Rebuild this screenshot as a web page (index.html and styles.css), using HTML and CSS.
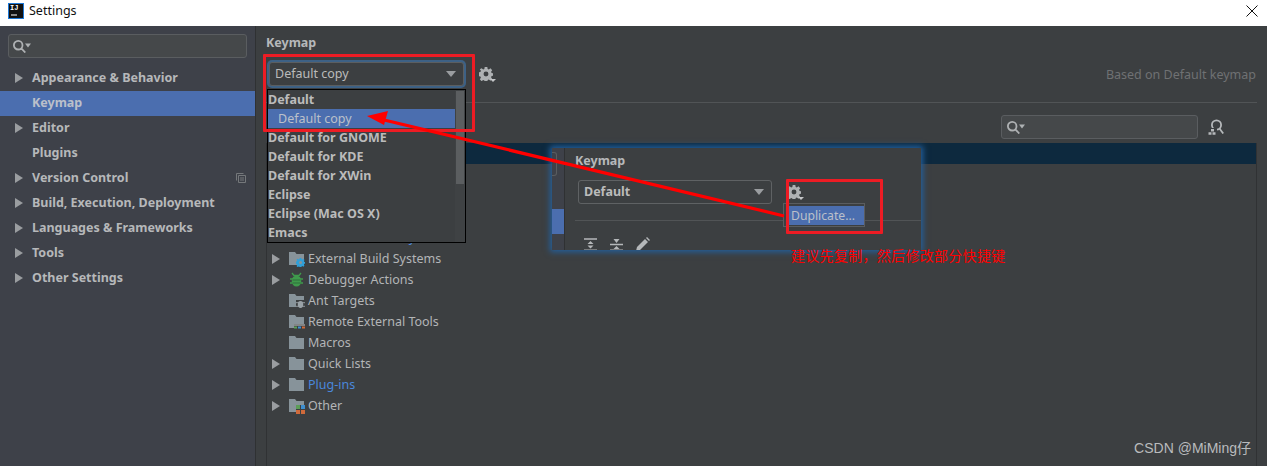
FILE: index.html
```html
<!DOCTYPE html>
<html lang="en">
<head>
<meta charset="utf-8">
<title>Settings</title>
<link rel="stylesheet" href="styles.css">
</head>
<body>
<svg class="defs" width="0" height="0" aria-hidden="true">
  <symbol id="tri" viewBox="0 0 8 10"><path d="M0 0 8 5 0 10z"/></symbol>
  <symbol id="folder" viewBox="0 0 15 13"><path d="M0 0h6l1.500 2H15v11H0z"/></symbol>
  <symbol id="gear" viewBox="0 0 16 16"><path fill-rule="evenodd" d="M6.500 0h3l.4 2.200 1.300.6 1.900-1.300 2 2.100-1.300 1.800.6 1.400 2.200.4v2.800l-2.200.4-.6 1.400 1.300 1.800-2 2.100-1.900-1.300-1.300.5-.4 2.700h-3l-.4-2.200-1.300-.5-1.900 1.300-2-2.100 1.300-1.800-.6-1.400-2.200-.4V6.200l2.200-.4.6-1.400L.9 2.600l2-1.100 1.900 1.300 1.300-.6zM8 5.200a2.800 2.800 0 1 0 0 5.600 2.800 2.800 0 0 0 0-5.600z"/></symbol>
  <symbol id="loupe" viewBox="0 0 18 13"><path fill="none" stroke="currentColor" stroke-width="1.800" d="M5.200.9a4.300 4.300 0 1 0 0 8.600 4.300 4.300 0 0 0 0-8.600zM8.300 8.300l4 4.200"/><path fill="currentColor" d="M12 3.500h6l-3 4z"/></symbol>
</svg>

<div class="window">
  <header class="titlebar">
    <svg class="app-logo" viewBox="0 0 16 16" width="16" height="16" aria-hidden="true">
      <rect x=".5" y=".5" width="15" height="15" fill="#111" stroke="#1e78d6"/>
      <rect x="3" y="11.500" width="6" height="1" fill="#fff"/>
    </svg>
    <span class="logo-letters">IJ</span>
    <span class="title">Settings</span>
    <svg class="close" viewBox="0 0 12 12" width="12" height="12" aria-hidden="true"><path d="M.5.5l11 11M11.500.5l-11 11" stroke="#111" fill="none"/></svg>
  </header>

  <div class="body">
    <aside class="sidebar">
      <div class="side-search"><svg class="loupe"><use href="#loupe"/></svg></div>
      <nav class="nav">
        <div class="nav-row"><svg class="tri"><use href="#tri"/></svg>Appearance &amp; Behavior</div>
        <div class="nav-row selected">Keymap</div>
        <div class="nav-row"><svg class="tri"><use href="#tri"/></svg>Editor</div>
        <div class="nav-row">Plugins</div>
        <div class="nav-row"><svg class="tri"><use href="#tri"/></svg>Version Control
          <svg class="project-mark" viewBox="0 0 10 10" width="10" height="10" aria-hidden="true"><path d="M.5 7.500V.5h7M2.500 2.500h7v7h-7zM4 5h4M4 7h4" fill="none" stroke="#75787b"/></svg>
        </div>
        <div class="nav-row"><svg class="tri"><use href="#tri"/></svg>Build, Execution, Deployment</div>
        <div class="nav-row"><svg class="tri"><use href="#tri"/></svg>Languages &amp; Frameworks</div>
        <div class="nav-row"><svg class="tri"><use href="#tri"/></svg>Tools</div>
        <div class="nav-row"><svg class="tri"><use href="#tri"/></svg>Other Settings</div>
      </nav>
    </aside>

    <main class="content">
      <h2 class="heading">Keymap</h2>
      <div class="scheme-row">
        <div class="combo focused"><span>Default copy</span><i class="caret"></i></div>
        <svg class="gear-btn"><use href="#gear"/></svg><i class="mini-caret"></i>
        <span class="based-on">Based on Default keymap</span>
      </div>
      <div class="rule"></div>
      <div class="filter-row">
        <div class="filter"><svg class="loupe"><use href="#loupe"/></svg></div>
        <svg class="shortcut-find" viewBox="0 0 16 16" width="16" height="16" aria-hidden="true">
          <circle cx="8.500" cy="6" r="4.600" fill="none" stroke="#b5b8ba" stroke-width="1.800"/>
          <path d="M11.500 9.500l3.700 5" fill="none" stroke="#b5b8ba" stroke-width="1.800"/>
          <path d="M0 9h9v7H0z" fill="#3c3f41"/>
          <path d="M3 10h3v2.500H3zM.5 13.200h3v2.500h-3zM4.500 13.200h3v2.500h-3z" fill="#b5b8ba"/>
        </svg>
      </div>
      <div class="tree">
        <div class="tree-row active"></div>
        <div class="tree-row"></div>
        <div class="tree-row"></div>
        <div class="tree-row"></div>
        <div class="tree-row"><span class="label link">Version Control Systems</span></div>
        <div class="tree-row"><svg class="tri"><use href="#tri"/></svg>
          <span class="ticon"><svg class="folder"><use href="#folder"/></svg><svg class="badge" viewBox="0 0 16 16"><use href="#gear" fill="#2f9fd8"/></svg></span>
          <span class="label">External Build Systems</span></div>
        <div class="tree-row"><svg class="tri"><use href="#tri"/></svg>
          <span class="ticon"><svg viewBox="0 0 15 15" width="15" height="15" aria-hidden="true"><path d="M3 1l2 2.500h5L12 1M1 7h13M1 11h13" stroke="#3f9a4c" stroke-width="1.300" fill="none"/><ellipse cx="7.500" cy="9" rx="4.800" ry="5.500" fill="#3f9a4c"/><path d="M3.500 8h8M3.500 11h8" stroke="#2f6e3a"/></svg></span>
          <span class="label">Debugger Actions</span></div>
        <div class="tree-row indent">
          <span class="ticon"><svg class="folder"><use href="#folder"/></svg><svg class="badge" viewBox="0 0 10 10"><rect width="10" height="10" fill="#3c3f41"/><ellipse cx="5" cy="5" rx="3" ry="3.800" fill="#9aa3a8"/><path d="M0 3h10M0 7h10" stroke="#9aa3a8"/></svg></span>
          <span class="label">Ant Targets</span></div>
        <div class="tree-row indent">
          <span class="ticon"><svg class="folder"><use href="#folder"/></svg><svg class="badge wide" viewBox="0 0 11 5"><rect width="11" height="5" fill="#3c3f41"/><path d="M0 1h11" stroke="#c9cccd"/><rect x="0" y="2.500" width="3" height="2" fill="#5b9d58"/><rect x="4" y="2.500" width="3" height="2" fill="#3d8fd1"/><rect x="8" y="2.500" width="3" height="2" fill="#cf6a3b"/></svg></span>
          <span class="label">Remote External Tools</span></div>
        <div class="tree-row indent">
          <span class="ticon"><svg class="folder"><use href="#folder"/></svg></span>
          <span class="label">Macros</span></div>
        <div class="tree-row"><svg class="tri"><use href="#tri"/></svg>
          <span class="ticon"><svg class="folder"><use href="#folder"/></svg></span>
          <span class="label">Quick Lists</span></div>
        <div class="tree-row"><svg class="tri"><use href="#tri"/></svg>
          <span class="ticon"><svg class="folder"><use href="#folder"/></svg></span>
          <span class="label link">Plug-ins</span></div>
        <div class="tree-row"><svg class="tri"><use href="#tri"/></svg>
          <span class="ticon"><svg class="folder"><use href="#folder"/></svg><svg class="badge" viewBox="0 0 9 9"><rect width="9" height="9" fill="#3c3f41"/><rect width="4" height="4" fill="#5b9d58"/><rect x="5" width="4" height="4" fill="#3d8fd1"/><rect y="5" width="4" height="4" fill="#cf6a3b"/><rect x="5" y="5" width="4" height="4" fill="#cf6a3b"/></svg></span>
          <span class="label">Other</span></div>
      </div>
    </main>
  </div>

  <!-- scheme list opened from the combo box -->
  <div class="dropdown">
    <div class="dropdown-list">
      <div class="dd-item">Default</div>
      <div class="dd-item current">Default copy</div>
      <div class="dd-item">Default for GNOME</div>
      <div class="dd-item">Default for KDE</div>
      <div class="dd-item">Default for XWin</div>
      <div class="dd-item">Eclipse</div>
      <div class="dd-item">Eclipse (Mac OS X)</div>
      <div class="dd-item">Emacs</div>
    </div>
    <div class="dd-scroll"><div class="dd-thumb"></div></div>
  </div>

  <!-- inset panel showing the Duplicate action -->
  <div class="inset">
    <div class="inset-side"><div class="inset-search"></div><div class="inset-sel"></div></div>
    <div class="inset-main">
      <h2 class="heading">Keymap</h2>
      <div class="inset-row">
        <div class="combo plain"><span>Default</span><i class="caret"></i></div>
        <svg class="gear-btn"><use href="#gear"/></svg><i class="mini-caret"></i>
      </div>
      <div class="inset-rule"></div>
      <div class="inset-tools">
        <svg viewBox="0 0 13 13" width="13" height="13" aria-hidden="true"><path d="M0 1h13M0 12.300h13" stroke="#b5b8ba" stroke-width="1.400"/><path d="M6.500 3l3 3h-6zM6.500 10.500l-3-3h6z" fill="#b5b8ba"/></svg>
        <svg viewBox="0 0 13 13" width="13" height="13" aria-hidden="true"><path d="M0 6.500h13M0 12.300h13" stroke="#b5b8ba" stroke-width="1.400"/><path d="M6.500 5l-3-4h6zM6.500 8l3 3h-6z" fill="#b5b8ba"/></svg>
        <svg viewBox="0 0 14 14" width="14" height="14" aria-hidden="true"><path d="M0 14l1-4 8-8 3 3-8 8zM10 1l1-1 3 3-1 1z" fill="#b5b8ba"/></svg>
      </div>
    </div>
  </div>
  <div class="duplicate"><span>Duplicate...</span></div>

  <!-- red callouts drawn over the dialog -->
  <div class="callout first"></div>
  <div class="callout second"></div>
  <svg class="arrow" viewBox="0 0 1267 466" width="1267" height="466" aria-hidden="true">
    <path d="M784 216 380 119" stroke="#f00" stroke-width="3.200" fill="none"/>
    <path d="M367 116 388 111 384 125z" fill="#f00"/>
  </svg>
  <div class="note">建议先复制&#xFF0C;然后修改部分快捷键</div>
  <div class="watermark">CSDN @MiMing仔</div>
</div>
</body>
</html>
```

FILE: styles.css
```css
* { box-sizing: border-box; }

html, body { margin: 0; padding: 0; }

body {
  width: 1267px;
  height: 466px;
  overflow: hidden;
  font-family: "Noto Sans", "Noto Sans CJK SC", sans-serif;
  font-size: 12.5px;
  color: #bbb;
  background: #3c3f41;
}

.defs { position: absolute; }

.window {
  position: relative;
  width: 1267px;
  height: 466px;
  display: flex;
  flex-direction: column;
  overflow: hidden;
}

/* title bar */
.titlebar {
  position: relative;
  height: 26px;
  flex: none;
  display: flex;
  align-items: flex-start;
  padding: 3px 9px 0 8px;
  background: #fff;
  color: #111;
}

.app-logo { flex: none; }

.logo-letters {
  position: absolute;
  left: 10px;
  top: 4px;
  font: bold 7px/8px "Liberation Mono", monospace;
  color: #fff;
}

.title {
  margin-left: 5px;
  font-size: 12.5px;
  line-height: 15px;
  flex: 1;
}

.close {
  flex: none;
  margin-top: 2px;
}

.body {
  flex: 1;
  display: flex;
  min-height: 0;
}

/* left settings tree */
.sidebar {
  width: 256px;
  flex: none;
  background: #3e4149;
  border-right: 1px solid #2f3133;
  padding-top: 8px;
}

.side-search {
  width: 239px;
  height: 24px;
  margin-left: 8px;
  display: flex;
  align-items: center;
  padding-left: 4px;
  background: #45484a;
  border: 1px solid #5a5d60;
  border-radius: 3px;
}

.loupe {
  width: 18px;
  height: 13px;
  color: #aeb1b3;
}

.nav { margin-top: 8px; }

.nav-row {
  position: relative;
  height: 25px;
  display: flex;
  align-items: center;
  padding: 0 0 2px 32px;
  font-weight: 700;
  color: #b6b8ba;
}

.nav-row .tri {
  position: absolute;
  left: 15px;
  top: 7px;
}

.nav-row.selected {
  background: #4b6eaf;
  color: #bbc0ca;
}

.tri {
  width: 8px;
  height: 10px;
  fill: #9a9da0;
}

.project-mark {
  position: absolute;
  left: 236px;
  top: 7px;
}

/* main pane */
.content {
  flex: 1;
  min-width: 0;
  display: flex;
  flex-direction: column;
  padding: 8px 10px 0;
}

.heading {
  margin: 0;
  height: 18px;
  font-size: 12.5px;
  line-height: 18px;
  font-weight: 700;
  color: #b6b8ba;
}

.scheme-row {
  position: relative;
  height: 26px;
  margin-top: 9px;
  display: flex;
  align-items: center;
  padding-left: 3px;
}

.combo {
  display: flex;
  align-items: center;
  justify-content: space-between;
  border-radius: 3px;
}

.combo.focused {
  width: 195px;
  height: 24px;
  padding: 0 7px 1px 5px;
  background: #3c3f41;
  border: 1px solid #5b5e60;
  box-shadow: 0 0 0 2px #3d6185;
}

.caret {
  width: 0;
  height: 0;
  border-left: 5px solid transparent;
  border-right: 5px solid transparent;
  border-top: 6px solid #9a9da0;
}

.gear-btn {
  width: 14px;
  height: 14px;
  fill: #aeb1b3;
  margin-left: 15px;
}

.mini-caret {
  width: 0;
  height: 0;
  margin: 12px 0 0 -3px;
  border-left: 3px solid transparent;
  border-right: 3px solid transparent;
  border-top: 3px solid #c4c6c8;
}

.based-on {
  margin-left: auto;
  padding-right: 1px;
  color: #6f7173;
}

.rule {
  height: 1px;
  margin-top: 15px;
  background: #515456;
}

.filter-row {
  height: 24px;
  margin-top: 12px;
  display: flex;
  align-items: center;
  justify-content: flex-end;
  padding-right: 33px;
  gap: 10px;
}

.filter {
  width: 197px;
  height: 24px;
  display: flex;
  align-items: center;
  padding-left: 5px;
  background: #45484a;
  border: 1px solid #5a5d60;
  border-radius: 3px;
}

/* action tree */
.tree {
  flex: 1;
  margin-top: 4px;
  border-left: 1px solid #303234;
  border-right: 1px solid #303234;
}

.tree-row {
  height: 21px;
  display: flex;
  align-items: center;
  padding-left: 5px;
  color: #b3b5b7;
}

.tree-row.indent { padding-left: 22px; }

.tree-row.active { background: #0d293e; }

.ticon {
  position: relative;
  width: 15px;
  height: 15px;
  margin-left: 9px;
  display: flex;
  align-items: center;
  flex: none;
}

.indent .ticon { margin-left: 0; }

.folder {
  width: 15px;
  height: 13px;
  fill: #87939a;
}

.badge {
  position: absolute;
  right: -1px;
  bottom: -1px;
  width: 9px;
  height: 9px;
}

.badge.wide {
  right: -1px;
  bottom: 0;
  width: 11px;
  height: 5px;
}

.label {
  margin-left: 4px;
  white-space: nowrap;
}

.tree-row:nth-child(5) .label { margin-left: 36px; }

.link { color: #4a88dc; }

/* opened scheme list */
.dropdown {
  position: absolute;
  left: 267px;
  top: 89px;
  width: 199px;
  height: 154px;
  display: flex;
  background: #3c3f41;
  border: 1px solid #000;
}

.dropdown-list {
  flex: 1;
  display: flex;
  flex-direction: column;
}

.dd-item {
  height: 19px;
  line-height: 19px;
  padding-left: 0;
  font-weight: 700;
  color: #bbb;
  white-space: nowrap;
}

.dd-item.current {
  padding-left: 10px;
  font-weight: 400;
  background: #4b6eaf;
  color: #bbc0ca;
}

.dd-scroll {
  width: 10px;
  padding: 1px 1px 0 1px;
  background: #3f4244;
}

.dd-thumb {
  height: 93px;
  background: #5b5e60;
}

/* inset panel */
.inset {
  position: absolute;
  left: 552px;
  top: 148px;
  width: 369px;
  height: 102px;
  display: flex;
  overflow: hidden;
  background: #3c3f41;
  box-shadow: 0 0 6px 2px #23609e;
}

.inset-side {
  position: relative;
  width: 13px;
  flex: none;
  background: #3e4149;
  border-right: 1px solid #2f3133;
}

.inset-search {
  height: 24px;
  width: 5px;
  margin-top: 4px;
  border: 1px solid #5a5d60;
  border-left: 0;
  border-radius: 0 3px 3px 0;
}

.inset-sel {
  position: absolute;
  left: 0;
  top: 61px;
  width: 12px;
  height: 25px;
  background: #4b6eaf;
}

.inset-main {
  flex: 1;
  padding: 4px 0 0 10px;
}

.inset-row {
  display: flex;
  align-items: center;
  height: 24px;
  margin-top: 10px;
  padding-left: 3px;
}

.combo.plain {
  width: 194px;
  height: 24px;
  padding: 0 7px 1px 5px;
  border: 1px solid #5f6264;
  font-weight: 700;
}

.inset-rule {
  height: 1px;
  margin-top: 16px;
  background: #515456;
}

.inset-tools {
  display: flex;
  align-items: center;
  gap: 13px;
  margin-top: 16px;
  padding-left: 9px;
}

.duplicate {
  position: absolute;
  left: 783px;
  top: 203px;
  width: 82px;
  height: 24px;
  padding: 2px 0 1px 2px;
  background: #3c3f41;
  border: 1px solid #5a5d60;
}

.duplicate span {
  display: block;
  height: 100%;
  padding-left: 5px;
  line-height: 19px;
  font-size: 12.2px;
  background: #4b6eaf;
  color: #bbc0ca;
}

/* annotations */
.callout {
  position: absolute;
  border: 3px solid #ed1c24;
  border-radius: 1px;
}

.callout.first {
  left: 263px;
  top: 54px;
  width: 212px;
  height: 78px;
}

.callout.second {
  left: 786px;
  top: 179px;
  width: 97px;
  height: 55px;
}

.arrow {
  position: absolute;
  left: 0;
  top: 0;
  pointer-events: none;
}

.note {
  position: absolute;
  left: 791px;
  top: 245px;
  font-size: 14px;
  line-height: 20px;
  letter-spacing: .3px;
  color: #f00;
  font-family: "Noto Sans CJK SC", sans-serif;
  white-space: nowrap;
}

.watermark {
  position: absolute;
  right: 16px;
  top: 438px;
  font-family: "Liberation Sans", "Noto Sans CJK SC", sans-serif;
  font-size: 14px;
  line-height: 20px;
  color: #b9bbbd;
  white-space: nowrap;
}
```
